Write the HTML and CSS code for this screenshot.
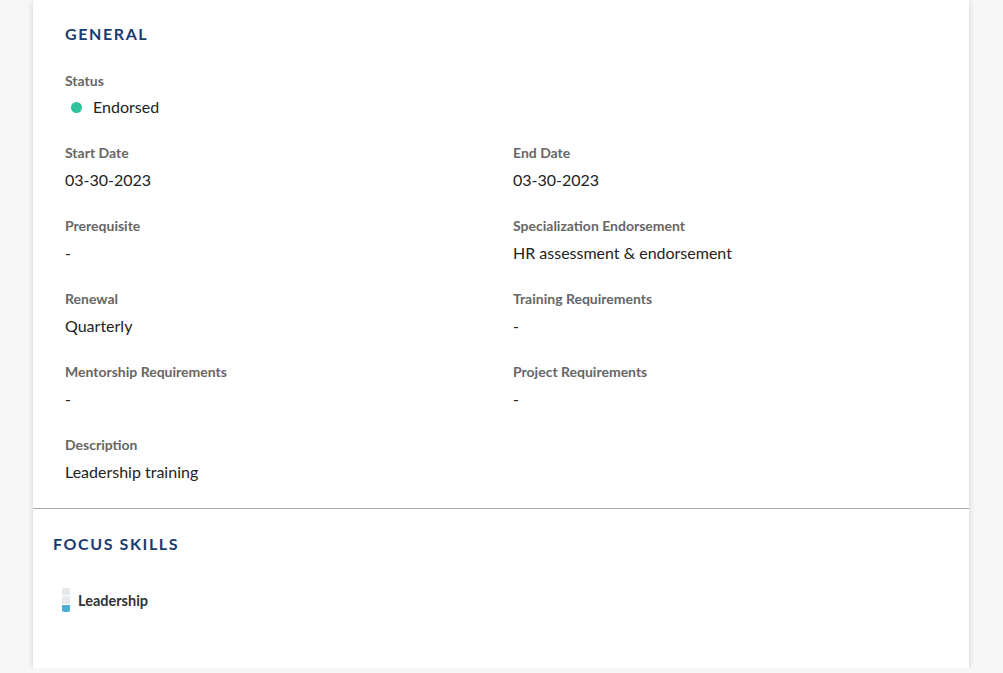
FILE: index.html
```html
<!DOCTYPE html>
<html>
<head>
<meta charset="utf-8">
<link rel="stylesheet" href="styles.css">
</head>
<body>
<div class="card">
  <section class="general">
    <h2 class="heading">GENERAL</h2>
    <div class="field">
      <div class="label">Status</div>
      <div class="value status"><span class="dot"></span>Endorsed</div>
    </div>
    <div class="grid">
      <div class="field">
        <div class="label">Start Date</div>
        <div class="value">03-30-2023</div>
      </div>
      <div class="field">
        <div class="label">End Date</div>
        <div class="value">03-30-2023</div>
      </div>
      <div class="field">
        <div class="label">Prerequisite</div>
        <div class="value">-</div>
      </div>
      <div class="field">
        <div class="label">Specialization Endorsement</div>
        <div class="value">HR assessment &amp; endorsement</div>
      </div>
      <div class="field">
        <div class="label">Renewal</div>
        <div class="value">Quarterly</div>
      </div>
      <div class="field">
        <div class="label">Training Requirements</div>
        <div class="value">-</div>
      </div>
      <div class="field">
        <div class="label">Mentorship Requirements</div>
        <div class="value">-</div>
      </div>
      <div class="field">
        <div class="label">Project Requirements</div>
        <div class="value">-</div>
      </div>
      <div class="field">
        <div class="label">Description</div>
        <div class="value">Leadership training</div>
      </div>
    </div>
  </section>
  <section class="skills">
    <h2 class="heading">FOCUS SKILLS</h2>
    <div class="skill">
      <span class="meter"><span class="seg"></span><span class="seg"></span><span class="seg on"></span></span>
      <span class="skill-name">Leadership</span>
    </div>
  </section>
</div>
</body>
</html>
```
FILE: styles.css
```css
html, body {
  margin: 0;
  padding: 0;
  background: #f7f7f7;
  font-family: Lato, "Open Sans", sans-serif;
}
.card {
  margin-left: 33px;
  width: 936px;
  background: #fff;
  box-shadow: 0 1px 6px rgba(0, 0, 0, 0.16);
}
.general {
  padding: 24px 32px 26px;
  border-bottom: 1px solid #a9a9a9;
}
.heading {
  margin: 0;
  font-size: 16px;
  line-height: 20px;
  font-weight: 700;
  letter-spacing: 1.6px;
  color: #1a3b70;
}
.general .heading {
  margin-bottom: 27px;
}
.grid {
  display: grid;
  grid-template-columns: 1fr 1fr;
  column-gap: 24px;
  row-gap: 26px;
  margin-top: 26px;
}
.label {
  font-size: 14px;
  line-height: 20px;
  font-weight: 700;
  color: #666;
}
.value {
  margin-top: 7px;
  font-size: 16px;
  line-height: 20px;
  color: #222;
}
.status {
  display: flex;
  align-items: center;
  margin-top: 6px;
}
.dot {
  width: 11px;
  height: 11px;
  border-radius: 50%;
  background: #2ec29d;
  margin: 0 11px 0 6px;
}
.skills {
  padding: 25px 20px 56px;
}
.skill {
  display: flex;
  align-items: center;
  gap: 8px;
  margin-top: 34px;
  margin-left: 9px;
}
.meter {
  display: flex;
  flex-direction: column;
  width: 8px;
  height: 24px;
  border-radius: 2px;
  overflow: hidden;
}
.seg {
  flex: 1;
  background: #e6e9ec;
  border-bottom: 1px solid #fff;
}
.seg.on {
  background: #4aaed3;
  border-bottom: 0;
}
.skill-name {
  font-size: 14.5px;
  font-weight: 700;
  color: #333;
}
```
